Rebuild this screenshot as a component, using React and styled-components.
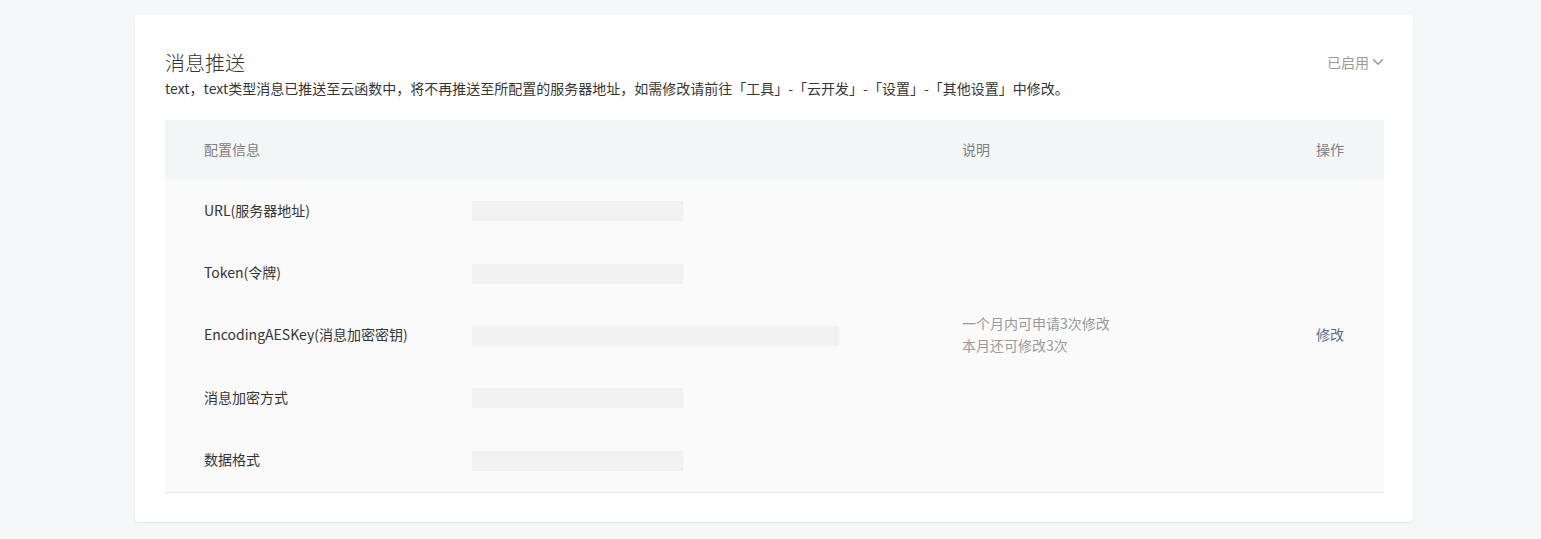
import React from 'react';
import styled, { createGlobalStyle } from 'styled-components';

const GlobalStyle = createGlobalStyle`
  html, body {
    margin: 0;
    padding: 0;
    background: #f6f7f9;
    font-family: "PingFang SC", "Noto Sans CJK SC", "Noto Sans", sans-serif;
    -webkit-font-smoothing: antialiased;
  }
`;

const Page = styled.div`
  width: 100%;
  min-height: 539px;
  box-sizing: border-box;
  padding: 15px 128px 0 135px;
`;

const Card = styled.section`
  width: 1278px;
  box-sizing: border-box;
  background: #fff;
  border-radius: 4px;
  box-shadow: 0 1px 2px rgba(0, 0, 0, 0.08);
  padding: 33px 29px 29px 30px;
`;

const CardHead = styled.div`
  display: flex;
  justify-content: space-between;
  align-items: flex-start;
`;

const Title = styled.h2`
  margin: 0;
  padding-top: 1px;
  height: 28px;
  font-size: 20px;
  font-weight: 300;
  line-height: 28px;
  color: #353535;
`;

const Status = styled.div`
  display: flex;
  align-items: center;
  gap: 3px;
  font-size: 14px;
  line-height: 28px;
  color: #9a9a9a;
  cursor: pointer;
`;

const Desc = styled.p`
  margin: 0;
  font-size: 14px;
  line-height: 22px;
  color: #353535;
`;

const Table = styled.div`
  margin-top: 21px;
  border-bottom: 1px solid #e7e7e7;
`;

const Row = styled.div`
  display: grid;
  grid-template-columns: 268px 490px 1fr 80px;
  align-items: center;
  min-height: ${({ $head }) => ($head ? '60px' : '62.4px')};
  padding: 0 40px 0 39px;
  background: ${({ $head }) => ($head ? '#f3f6f7' : '#fafafa')};
  font-size: 14px;
  line-height: 22px;
  color: ${({ $head }) => ($head ? '#7f7f7f' : '#353535')};
`;

const Cell = styled.div`
  text-align: ${({ $right }) => ($right ? 'right' : 'left')};
  padding-bottom: 3px;
`;

const BarCell = styled.div`
  display: flex;
  align-items: center;
`;

const Bar = styled.div`
  width: ${({ $wide }) => ($wide ? '367px' : '211px')};
  height: 20px;
  background: #f1f1f1;
`;

const Note = styled.div`
  color: #9a9a9a;
  font-size: 14px;
  line-height: 22px;
`;

const Link = styled.a`
  color: #576b95;
  text-decoration: none;
  cursor: pointer;
`;

const Chevron = () => (
  <svg width="12" height="12" viewBox="0 0 12 12" fill="none">
    <path d="M1.5 3.8l4.5 4.4 4.5-4.4" stroke="#9a9a9a" strokeWidth="1.5" strokeLinecap="round" strokeLinejoin="round" />
  </svg>
);

const rows = [
  { label: 'URL(服务器地址)' },
  { label: 'Token(令牌)' },
  { label: 'EncodingAESKey(消息加密密钥)', wide: true, note: ['一个月内可申请3次修改', '本月还可修改3次'], action: '修改' },
  { label: '消息加密方式' },
  { label: '数据格式' },
];

export default function App() {
  return (
    <>
      <GlobalStyle />
      <Page>
        <Card>
          <CardHead>
            <Title>消息推送</Title>
            <Status>
              已启用
              <Chevron />
            </Status>
          </CardHead>
          <Desc>
            text，text类型消息已推送至云函数中，将不再推送至所配置的服务器地址，如需修改请前往「工具」-「云开发」-「设置」-「其他设置」中修改。
          </Desc>
          <Table>
            <Row $head>
              <Cell>配置信息</Cell>
              <Cell />
              <Cell>说明</Cell>
              <Cell $right>操作</Cell>
            </Row>
            {rows.map((r) => (
              <Row key={r.label}>
                <Cell>{r.label}</Cell>
                <BarCell>
                  <Bar $wide={r.wide} />
                </BarCell>
                <Cell>
                  {r.note && r.note.map((n) => <Note key={n}>{n}</Note>)}
                </Cell>
                <Cell $right>{r.action && <Link>{r.action}</Link>}</Cell>
              </Row>
            ))}
          </Table>
        </Card>
      </Page>
    </>
  );
}
